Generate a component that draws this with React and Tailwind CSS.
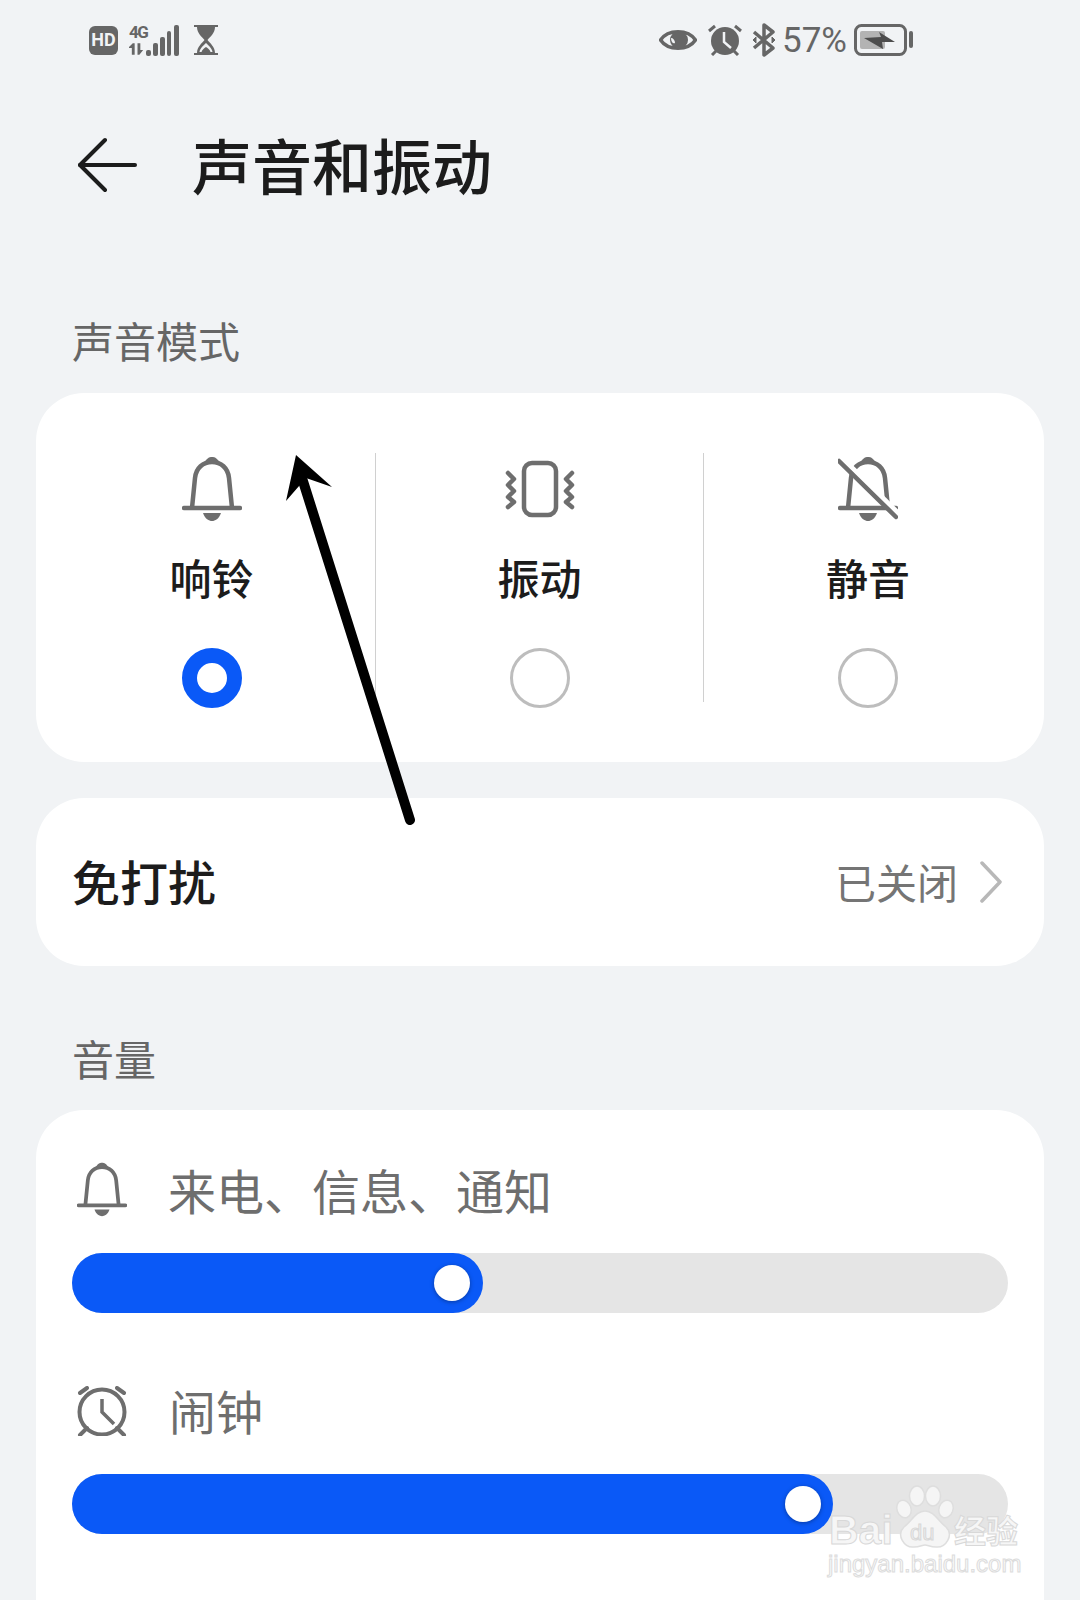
import React from "react";

const GREY = "#6e6e6e";

function Bell({ className, muted }) {
  return (
    <svg viewBox="0 0 60 68" className={className} fill="none">
      <path
        d="M10 53 L13 23 C14 13 21 7 30 7 C39 7 46 13 47 23 L50 53"
        stroke={GREY}
        strokeWidth="4.5"
      />
      <path d="M22 8 C25 3 27 2 30 2 C33 2 35 3 38 8Z" fill={GREY} />
      <path d="M2 53 H58" stroke={GREY} strokeWidth="4.5" strokeLinecap="round" />
      <path d="M21 58 H39 C37 64 33 66 30 66 C27 66 23 64 21 58Z" fill={GREY} />
      {muted && (
        <>
          <path d="M4 3 L62 60" stroke="#fff" strokeWidth="5" />
          <path d="M1 6 L58 62" stroke={GREY} strokeWidth="4.5" strokeLinecap="round" />
        </>
      )}
    </svg>
  );
}

function Vibrate({ className }) {
  return (
    <svg viewBox="0 0 72 68" className={className} fill="none" stroke={GREY} strokeWidth="4.5">
      <rect x="20" y="8" width="32" height="52" rx="8" />
      <path
        d="M4 18 L10 24 L4 30 L10 36 L4 42 L10 47 L4 52"
        strokeLinecap="round"
        strokeLinejoin="round"
      />
      <path
        d="M68 18 L62 24 L68 30 L62 36 L68 42 L62 47 L68 52"
        strokeLinecap="round"
        strokeLinejoin="round"
      />
    </svg>
  );
}

function AlarmLine({ className }) {
  return (
    <svg viewBox="0 0 50 50" className={className} fill="none" stroke={GREY} strokeWidth="4">
      <circle cx="25" cy="26" r="22.5" />
      <path d="M25 13 V26 L37 38" strokeWidth="3.5" />
      <path d="M3 7 L10 2 M47 7 L40 2" strokeLinecap="round" />
      <path d="M3 49 L10 42 M47 49 L40 42" strokeLinecap="round" />
    </svg>
  );
}

function Slider({ percent, thumb }) {
  return (
    <div className="relative h-[60px] w-[936px] rounded-full bg-[#e5e5e5]">
      <div
        className="relative h-full rounded-full bg-[#0a59f7]"
        style={{ width: percent }}
      >
        <div
          className="absolute top-[12px] h-[36px] w-[36px] rounded-full bg-white shadow-[0_1px_4px_rgba(0,0,0,0.35)]"
          style={{ left: thumb }}
        />
      </div>
    </div>
  );
}

function Mode({ label, icon, active, last }) {
  return (
    <div
      className={
        "flex h-[249px] flex-col items-center " +
        (last ? "" : "border-r border-[#d0d0d0]")
      }
    >
      <div className="mt-[2px] flex h-[68px] items-center justify-center">{icon}</div>
      <div className="mt-[26px] h-[59px] text-[42px] font-medium leading-[56px] text-[#1c1c1c]">{label}</div>
      {active ? (
        <div className="mt-[43px] h-[60px] w-[60px] shrink-0 rounded-full border-[15px] border-[#0a59f7] bg-white" />
      ) : (
        <div className="mt-[43px] h-[60px] w-[60px] shrink-0 rounded-full border-[3px] border-[#bdbdbd] bg-white" />
      )}
    </div>
  );
}

function StatusLeft() {
  return (
    <div className="flex items-center">
      <div className="flex h-[29px] w-[29px] items-center justify-center rounded-[6px] bg-[#666] font-['Roboto',sans-serif] text-[18px] font-bold leading-none text-[#f1f3f5]">
        HD
      </div>
      <div className="ml-[11px] flex w-[17px] flex-col">
        <span className="h-[16px] font-['Roboto',sans-serif] text-[17px] font-bold leading-[15px] tracking-[-1.5px] text-[#666]">
          4G
        </span>
        <svg viewBox="0 0 18 12" className="mt-[2px] h-[12px] w-[17px]" fill="#666">
          <path d="M0 4 L4 0 H6 V12 H3 V5 H0Z" />
          <path d="M9 0 H12 V7 H15 L11 12 H9Z" />
        </svg>
      </div>
      <svg viewBox="0 0 33 31" className="h-[31px] w-[33px]" fill="#666">
        <rect x="0" y="25" width="5" height="6" rx="2" />
        <rect x="7" y="18" width="5" height="13" rx="2" />
        <rect x="14" y="12" width="5" height="19" rx="2" />
        <rect x="21" y="6" width="4" height="25" rx="2" />
        <rect x="28" y="0" width="5" height="31" rx="2" />
      </svg>
      <svg viewBox="0 0 24 30" className="ml-[15px] h-[30px] w-[24px]">
        <path d="M0 1 H24 M0 29 H24" stroke="#666" strokeWidth="2" />
        <path d="M3 2 H21 C21 8 16 12 13.5 15 C16 18 21 22 21 28 H3 C3 22 8 18 10.5 15 C8 12 3 8 3 2Z" fill="#666" />
        <path d="M12 18 C10 20 6 23 5.5 27 H18.5 C18 23 14 20 12 18Z" fill="#f1f3f5" />
        <path d="M12 22 C10 23 8 25 7.5 27 H16.5 C16 25 14 23 12 22Z" fill="#666" />
      </svg>
    </div>
  );
}

function StatusRight() {
  return (
    <div className="flex items-center">
      <svg viewBox="0 0 38 26" className="h-[26px] w-[38px]" fill="none">
        <path d="M1.5 13 C9 2 29 2 36.5 13 C29 24 9 24 1.5 13Z" stroke="#666" strokeWidth="3.5" />
        <circle cx="20" cy="13" r="9" fill="#666" />
        <path d="M12 11 C14 11 16 13 16 16 C14 17 12 15 12 11Z" fill="#f1f3f5" />
      </svg>
      <svg viewBox="0 0 34 32" className="ml-[11px] h-[32px] w-[34px]" fill="none" stroke="#666">
        <circle cx="17" cy="17" r="14" fill="#666" stroke="none" />
        <path d="M16 8 V18 L23 24" stroke="#f1f3f5" strokeWidth="2.5" />
        <path d="M1 7 L7 2 M33 7 L27 2 M4 31 L8 27 M30 31 L26 27" strokeWidth="3" />
      </svg>
      <svg viewBox="0 0 24 34" className="ml-[10px] h-[34px] w-[24px]" fill="none" stroke="#666" strokeWidth="3.5">
        <path d="M2 9 L21 25 L12 32 V2 L21 9 L2 25" strokeLinejoin="round" />
        <path d="M1 17 L4 14 V20Z M23 17 L20 14 V20Z" fill="#666" strokeWidth="1" />
      </svg>
      <span className="ml-[6px] font-['Roboto',sans-serif] text-[35px] font-normal leading-none text-[#666]">
        57%
      </span>
      <svg viewBox="0 0 59 32" className="ml-[7px] h-[32px] w-[59px]" fill="none">
        <rect x="1.5" y="1.5" width="50" height="29" rx="6" stroke="#666" strokeWidth="3" />
        <rect x="6" y="7" width="25" height="18" rx="2" fill="#b3b3b3" />
        <path d="M10 14 L27 13 L25 8 L41 18 L28 18 L29 25 Z" fill="#4d4d4d" />
        <rect x="55" y="7" width="4" height="17" rx="2" fill="#666" />
      </svg>
    </div>
  );
}

function Watermark() {
  return (
    <div className="absolute left-[826px] top-[1483px] h-[96px] w-[200px]">
      <svg viewBox="0 0 62 64" className="absolute left-[68px] top-[2px] h-[64px] w-[62px]" fill="#f5f5f5" stroke="#dedede" strokeWidth="1.5">
        <ellipse cx="10" cy="24" rx="7" ry="9" transform="rotate(-20 10 24)" />
        <ellipse cx="23" cy="11" rx="7.5" ry="10" />
        <ellipse cx="39" cy="11" rx="7.5" ry="10" />
        <ellipse cx="52" cy="24" rx="7" ry="9" transform="rotate(20 52 24)" />
        <path d="M31 26 C40 26 44 36 52 42 C60 50 52 63 42 62 C36 62 34 60 31 60 C28 60 26 62 20 62 C10 63 2 50 10 42 C18 36 22 26 31 26Z" />
      </svg>
      <span className="absolute left-[84px] top-[37px] font-['Liberation_Sans',sans-serif] text-[22px] leading-[26px] text-[#efefef] [-webkit-text-stroke:1px_#d8d8d8]">
        du
      </span>
      <span className="absolute left-[3px] top-[24px] font-['Liberation_Sans',sans-serif] text-[41px] font-bold leading-[46px] text-[#f6f6f6] [-webkit-text-stroke:1px_#d8d8d8]">
        Bai
      </span>
      <span className="absolute left-[128px] top-[26px] font-['Noto_Sans_CJK_SC',sans-serif] text-[32px] font-bold leading-[40px] text-[#f6f6f6] [-webkit-text-stroke:1px_#d8d8d8]">
        经验
      </span>
      <span className="absolute left-[2px] top-[67px] font-['Liberation_Sans',sans-serif] text-[24px] leading-[28px] text-[#fbfbfb] [-webkit-text-stroke:1px_#dcdcdc]">
        jingyan.baidu.com
      </span>
    </div>
  );
}

export default function App() {
  return (
    <div className="relative h-[1600px] w-[1080px] overflow-hidden bg-[#f1f3f5] font-['Noto_Sans_CJK_SC',sans-serif]">
      <div className="flex h-[80px] items-center justify-between pl-[89px] pr-[167px]">
        <StatusLeft />
        <StatusRight />
      </div>

      <div className="flex h-[170px] items-center pl-[78px]">
        <svg viewBox="0 0 60 58" className="h-[58px] w-[60px]" fill="none" stroke="#1c1c1c" strokeWidth="4" strokeLinecap="round" strokeLinejoin="round">
          <path d="M27 4 L2 29 L27 54" />
          <path d="M2 29 H57" />
        </svg>
        <h1 className="mb-[3px] ml-[54px] text-[60px] font-medium leading-[80px] text-[#1c1c1c]">声音和振动</h1>
      </div>

      <div className="mt-[60px] h-[63px] pl-[72px] text-[42px] leading-[60px] text-[#666]">声音模式</div>

      <div className="mx-[36px] mt-[20px] h-[369px] rounded-[48px] bg-white px-[12px] pt-[60px]">
        <div className="grid grid-cols-3">
          <Mode label="响铃" active icon={<Bell className="h-[68px] w-[60px]" />} />
          <Mode label="振动" icon={<Vibrate className="h-[68px] w-[72px]" />} />
          <Mode label="静音" last icon={<Bell muted className="h-[68px] w-[60px]" />} />
        </div>
      </div>

      <div className="mx-[36px] mt-[36px] flex h-[168px] items-center justify-between rounded-[48px] bg-white pl-[36px] pr-[42px]">
        <span className="mb-[4px] text-[48px] font-medium leading-[64px] text-[#1c1c1c]">免打扰</span>
        <div className="flex items-center">
          <span className="mb-[3px] text-[41px] leading-[56px] text-[#757575]">已关闭</span>
          <svg viewBox="0 0 22 42" className="ml-[22px] h-[42px] w-[22px]" fill="none" stroke="#b8b8b8" strokeWidth="3.5" strokeLinecap="round" strokeLinejoin="round">
            <path d="M2 2 L20 21 L2 40" />
          </svg>
        </div>
      </div>

      <div className="mt-[62px] h-[63px] pl-[72px] text-[42px] leading-[60px] text-[#666]">音量</div>

      <div className="mx-[36px] mt-[19px] h-[600px] rounded-[48px] bg-white pl-[36px] pt-[50px]">
        <div className="flex h-[64px] items-center">
          <Bell className="mb-[6px] ml-[5px] h-[57px] w-[50px]" />
          <span className="mb-[6px] ml-[41px] text-[48px] leading-[64px] text-[#6e6e6e]">来电、信息、通知</span>
        </div>
        <div className="mt-[29px]">
          <Slider percent="411px" thumb="362px" />
        </div>
        <div className="mt-[68px] flex h-[64px] items-center">
          <AlarmLine className="mb-[5px] ml-[5px] h-[50px] w-[50px]" />
          <span className="mb-[6px] ml-[42px] text-[47px] leading-[64px] text-[#6e6e6e]">闹钟</span>
        </div>
        <div className="mt-[29px]">
          <Slider percent="761px" thumb="713px" />
        </div>
      </div>

      <Watermark />

      {/* annotation arrow drawn over the screenshot */}
      <svg viewBox="0 0 1080 1600" className="pointer-events-none absolute left-0 top-0 h-[1600px] w-[1080px]">
        <path d="M302 478 L410 820" stroke="#000" strokeWidth="10" strokeLinecap="round" />
        <path d="M296 455 L332 487 L306 478 L286 501Z" fill="#000" />
      </svg>
    </div>
  );
}
